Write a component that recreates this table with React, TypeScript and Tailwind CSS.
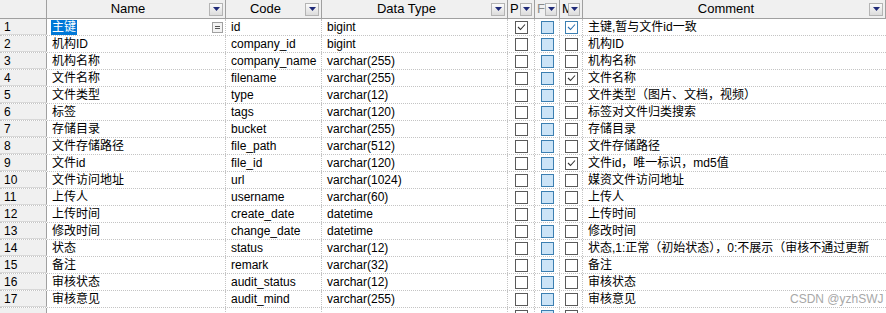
import React from "react";

type Row = {
  name: string;
  code: string;
  type: string;
  p?: boolean;
  m?: boolean;
  comment: string;
};

const rows: Row[] = [
  { name: "主键", code: "id", type: "bigint", p: true, m: true, comment: "主键,暂与文件id一致" },
  { name: "机构ID", code: "company_id", type: "bigint", comment: "机构ID" },
  { name: "机构名称", code: "company_name", type: "varchar(255)", comment: "机构名称" },
  { name: "文件名称", code: "filename", type: "varchar(255)", m: true, comment: "文件名称" },
  { name: "文件类型", code: "type", type: "varchar(12)", comment: "文件类型（图片、文档，视频）" },
  { name: "标签", code: "tags", type: "varchar(120)", comment: "标签对文件归类搜索" },
  { name: "存储目录", code: "bucket", type: "varchar(255)", comment: "存储目录" },
  { name: "文件存储路径", code: "file_path", type: "varchar(512)", comment: "文件存储路径" },
  { name: "文件id", code: "file_id", type: "varchar(120)", m: true, comment: "文件id，唯一标识，md5值" },
  { name: "文件访问地址", code: "url", type: "varchar(1024)", comment: "媒资文件访问地址" },
  { name: "上传人", code: "username", type: "varchar(60)", comment: "上传人" },
  { name: "上传时间", code: "create_date", type: "datetime", comment: "上传时间" },
  { name: "修改时间", code: "change_date", type: "datetime", comment: "修改时间" },
  { name: "状态", code: "status", type: "varchar(12)", comment: "状态,1:正常（初始状态），0:不展示（审核不通过更新" },
  { name: "备注", code: "remark", type: "varchar(32)", comment: "备注" },
  { name: "审核状态", code: "audit_status", type: "varchar(12)", comment: "审核状态" },
  { name: "审核意见", code: "audit_mind", type: "varchar(255)", comment: "审核意见" },
];

const font = "font-['Liberation_Sans','Noto_Sans_CJK_SC',sans-serif]";

function DropButton({ small }: { small?: boolean }) {
  return (
    <div
      className={`flex h-[13px] ${small ? "w-[12px]" : "w-[14px]"} shrink-0 items-start justify-center border border-[#b4b4b4] bg-gradient-to-b from-[#fbfbfb] to-[#dcdcdc] pt-[3px]`}
    >
      <svg width="7" height="4" viewBox="0 0 7 4">
        <path d="M0 0h7L3.5 4z" fill="#1f2a78" />
      </svg>
    </div>
  );
}

function HeaderCell({ label, w }: { label: string; w: string }) {
  return (
    <div className={`${w} flex h-full shrink-0 items-center border-r border-[#a0a0a0] pr-[2px]`}>
      <span className="flex-1 overflow-hidden whitespace-nowrap text-center">{label}</span>
      <DropButton />
    </div>
  );
}

function NarrowHeader({ label, w, faded }: { label: string; w: string; faded?: boolean }) {
  return (
    <div className={`${w} relative flex h-full shrink-0 items-center border-r border-[#a0a0a0] pl-[2px]`}>
      <span className={`whitespace-nowrap ${faded ? "text-[#8a8a8a]" : "text-black"}`}>{label}</span>
      <div className="absolute right-[2px] top-[3px]">
        <DropButton small />
      </div>
    </div>
  );
}

function Box({ kind, checked }: { kind: "plain" | "blue" | "focus"; checked?: boolean }) {
  const cls =
    kind === "blue"
      ? "border-[#3c7fb1] bg-[#cce4f7]"
      : kind === "focus"
      ? "border-[#3c7fb1] bg-white"
      : "border-[#5a5a5a] bg-white";
  return (
    <div className={`flex h-[13px] w-[13px] items-center justify-center border ${cls}`}>
      {checked && (
        <svg width="9" height="8" viewBox="0 0 9 8">
          <path d="M1 4l2.5 2.5L8 1.5" fill="none" stroke={kind === "focus" ? "#2a6fb0" : "#333"} strokeWidth="1.1" />
        </svg>
      )}
    </div>
  );
}

const cell = "flex h-full shrink-0 items-center border-r border-dotted border-[#c4c4c4] overflow-hidden whitespace-nowrap";

export default function App() {
  return (
    <div className={`${font} relative h-[313px] w-[886px] overflow-hidden bg-white text-[12px] text-black`}>
      {/* header */}
      <div className="flex h-[19px] border-b border-[#a0a0a0] bg-[#f0f0f0] text-[13px]">
        <div className="h-full w-[47px] shrink-0 border-r border-[#a0a0a0]" />
        <HeaderCell label="Name" w="w-[179px]" />
        <HeaderCell label="Code" w="w-[96px]" />
        <HeaderCell label="Data Type" w="w-[186px]" />
        <NarrowHeader label="P" w="w-[27px]" />
        <NarrowHeader label="F" w="w-[25px]" faded />
        <NarrowHeader label="M" w="w-[23px]" />
        <HeaderCell label="Comment" w="w-[303px]" />
      </div>

      {[...rows, null].map((r, i) => (
        <div key={i} className="flex h-[17px] border-b border-dotted border-[#c4c4c4]">
          <div className="flex h-full w-[47px] shrink-0 items-center border-r border-b border-solid border-r-[#a0a0a0] border-b-[#d8d8d8] bg-[#f0f0f0] pl-[4px]">
            {r ? i + 1 : ""}
          </div>
          <div className={`${cell} w-[179px] pl-[4px] pr-[2px]`}>
            {r && i === 0 ? (
              <>
                <span className="bg-[#0078d7] px-[1px] leading-[15px] text-white">{r.name}</span>
                <span className="flex-1" />
                <div className="flex h-[11px] w-[11px] items-center justify-center border border-[#a0a0a0] bg-[#f3f3f3]">
                  <div className="h-[3px] w-[5px] border-y border-[#555]" />
                </div>
              </>
            ) : (
              <span className="pl-[1px]">{r?.name}</span>
            )}
          </div>
          <div className={`${cell} w-[96px] pl-[5px]`}>{r?.code}</div>
          <div className={`${cell} w-[186px] pl-[5px]`}>{r?.type}</div>
          <div className={`${cell} w-[27px] justify-center`}>
            <Box kind="plain" checked={r?.p} />
          </div>
          <div className={`${cell} w-[25px] justify-center`}>
            <Box kind="blue" />
          </div>
          <div className={`${cell} w-[23px] justify-center`}>
            <Box kind={i === 0 ? "focus" : "plain"} checked={r?.m} />
          </div>
          <div className={`${cell} w-[303px] border-r-0 pl-[5px]`}>{r?.comment}</div>
        </div>
      ))}

      <div className="absolute left-[790px] top-[290px] text-[12px] text-[#a8a8a8]">CSDN @yzhSWJ</div>
    </div>
  );
}
